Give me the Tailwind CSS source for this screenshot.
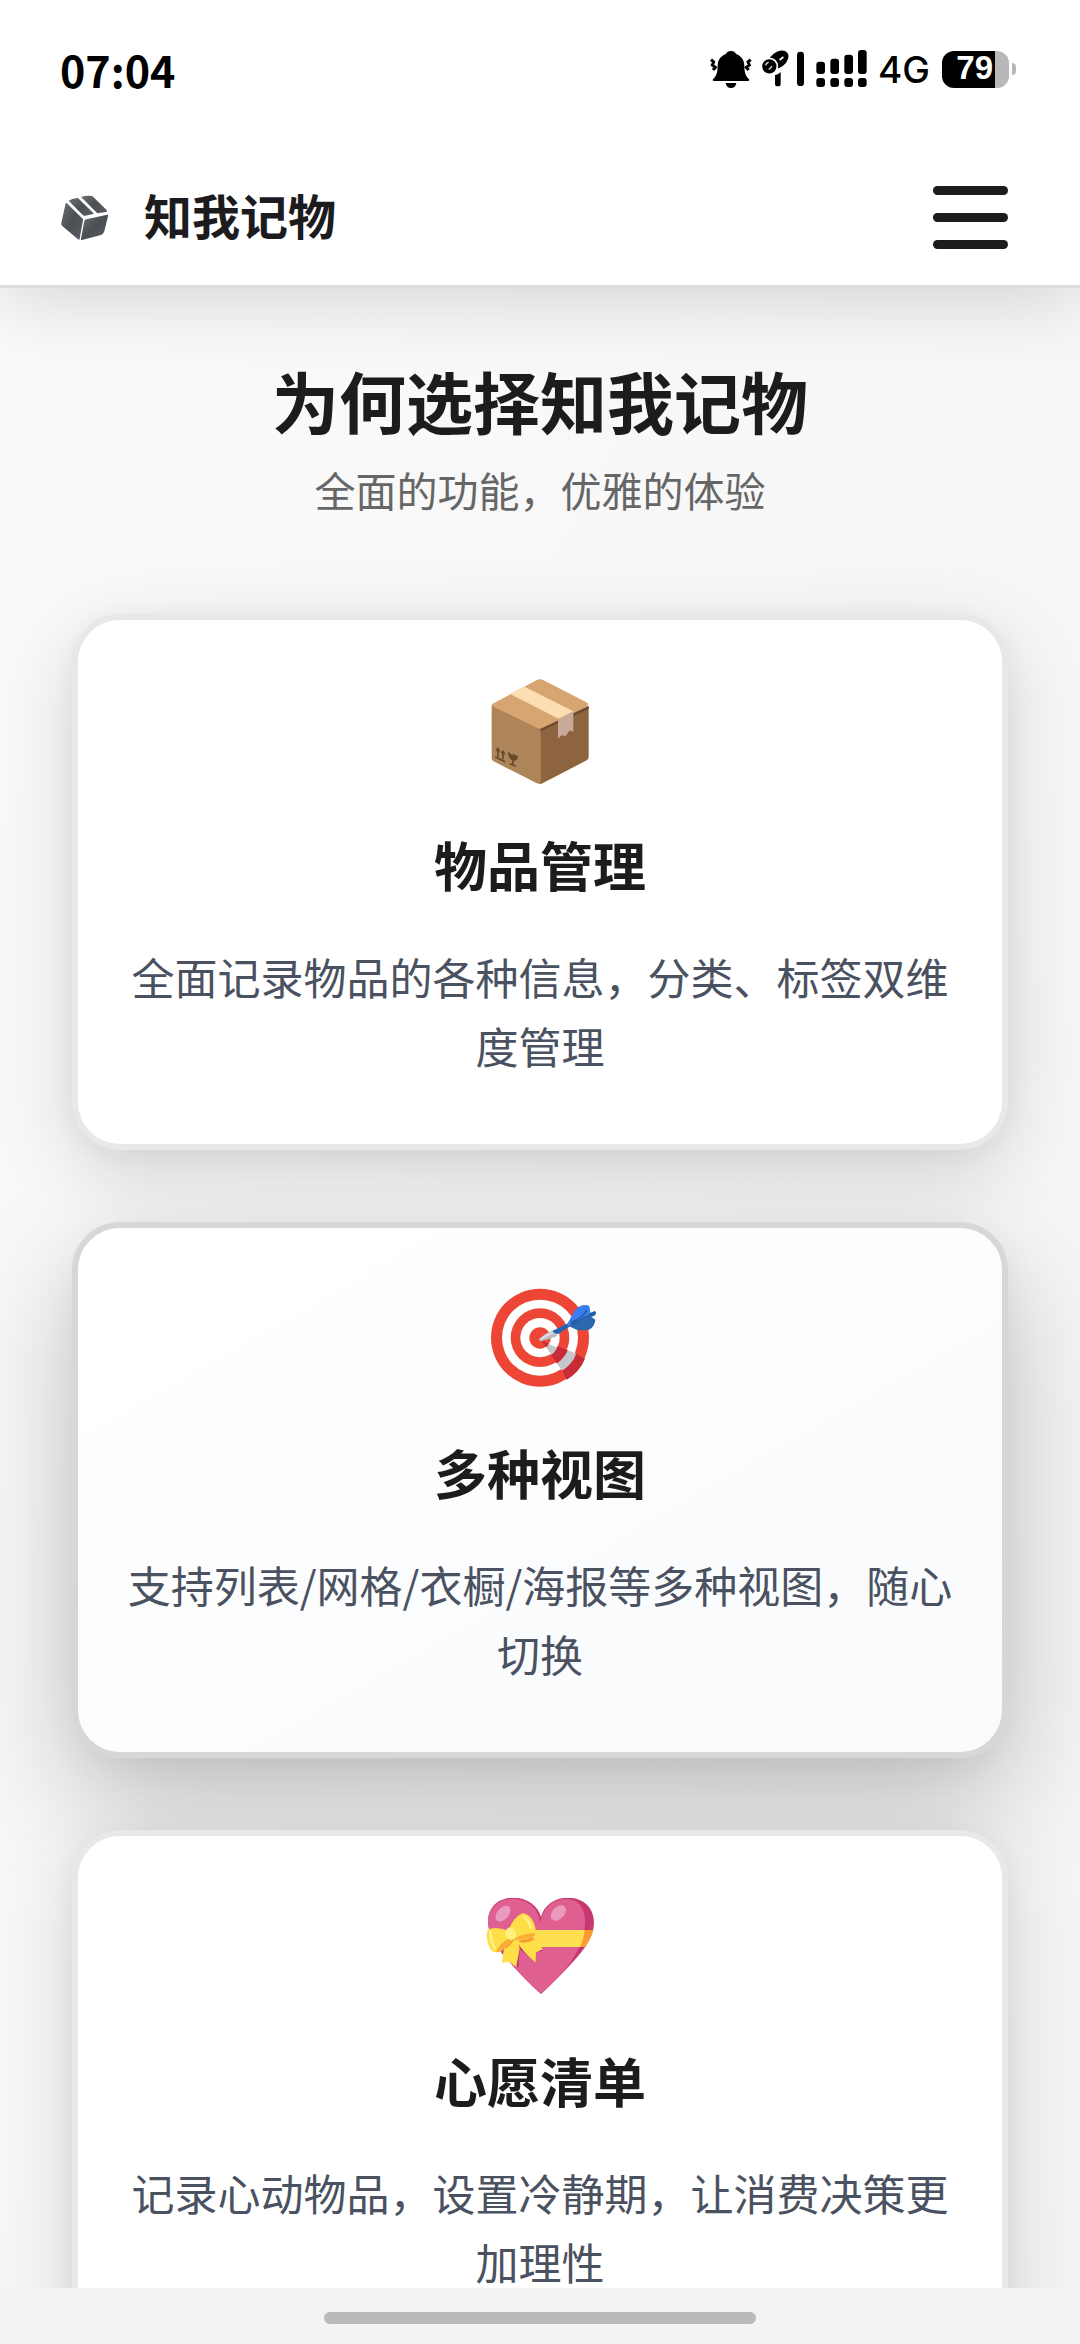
<!DOCTYPE html>
<html lang="zh-CN">
<head>
<meta charset="utf-8">
<meta name="viewport" content="width=device-width, initial-scale=1">
<title>知我记物</title>
<script src="https://cdn.jsdelivr.net/npm/@tailwindcss/browser@4"></script>
</head>
<body class="flex h-screen flex-col overflow-hidden bg-[#f8f8f8] font-['Noto_Sans_CJK_SC',sans-serif] text-[#1c1c1e]">

<header class="relative z-10 shrink-0 border-b-3 border-[#dedede] bg-white shadow-[0_12px_72px_rgba(0,0,0,0.15)]">
  <!-- Status bar -->
  <div class="flex h-[138px] items-center justify-between pr-16 pl-[60px] text-black">
    <time class="text-[43px] leading-none font-bold">07:04</time>
    <div class="flex items-center">
      <svg class="h-20 w-[184px]" viewBox="0 0 552 240" aria-label="静音、信号" role="img">
        <g transform="translate(4 0)">
          <path d="M119 66c8 0 13 4 15 9 17 6 25 19 25 35 0 20 4 30 13 40 4 4 2 6-3 6H69c-5 0-7-2-3-6 9-10 13-20 13-40 0-16 8-29 25-35 2-5 7-9 15-9zM103 162h32c-1 9-7 15-16 15s-15-6-16-15z"/>
          <path d="M59 92l8 7-4 9 9 7-7 8M178 92l-8 7 4 9-9 7 7 8" fill="none" stroke="#000" stroke-width="9"/>
          <ellipse cx="261" cy="92" rx="34" ry="23" transform="rotate(-38 261 92)"/>
          <circle cx="234" cy="112" r="24" stroke="#fff" stroke-width="5"/>
          <path d="M223 109q2-8 9-9M232 121q8-3 9-10" fill="none" stroke="#fff" stroke-width="4"/>
          <path d="M251 138c5 0 11-3 17-9v36q0 7-8 7h-1q-8 0-8-7z"/>
          <path d="M265 93l11-9" stroke="#fff" stroke-width="5"/>
          <rect x="317" y="68" width="21" height="103" rx="10"/>
          <rect x="375" y="98" width="26" height="37" rx="9"/><rect x="417" y="89" width="26" height="46" rx="9"/>
          <rect x="459" y="77" width="26" height="58" rx="9"/><rect x="500" y="63" width="26" height="72" rx="9"/>
          <rect x="375" y="147" width="26" height="27" rx="9"/><rect x="417" y="147" width="26" height="27" rx="9"/>
          <rect x="459" y="147" width="26" height="27" rx="9"/><rect x="500" y="147" width="26" height="27" rx="9"/>
        </g>
      </svg>
      <span class="pl-1 font-['Inter',sans-serif] text-[37px] leading-none font-medium">4G</span>
      <span class="ml-3 flex h-[37px] w-[67px] items-center justify-end overflow-hidden rounded-xl bg-linear-to-r from-black from-79% to-[#b8b8b8] to-79% pr-4 pb-1 font-['Liberation_Sans',sans-serif] text-[33px] leading-none font-bold text-white">79</span>
      <span class="ml-[3px] h-3 w-1 rounded-r-full bg-[#b8b8b8]"></span>
    </div>
  </div>
  <!-- Navigation -->
  <nav class="flex h-[147px] items-center justify-between pt-3 pr-[72px] pl-[60px]">
    <a href="#" class="flex items-center gap-9 text-[48px] leading-none font-bold">
      <svg class="size-12" viewBox="0 0 144 144" aria-hidden="true">
        <defs><linearGradient id="cube" x1="0" y1="0" x2="1" y2="1"><stop offset="0" stop-color="#6b6e73"/><stop offset="0.5" stop-color="#4b4e53"/><stop offset="1" stop-color="#5b5f66"/></linearGradient></defs>
        <g fill="url(#cube)" transform="translate(0 4)">
          <path d="M20 23L68 70Q70 72 69 75L59 130Q58 135 54 132L6 91Q3 88 4 83L16 28Q17 21 20 23z"/>
          <path d="M79 72L142 58Q145 58 144 63L133 108Q130 117 123 119L66 134Q62 135 63 130L73 76Q74 73 79 72z"/>
          <path d="M26 16Q37 9 54 8L102 55 76 61Q71 62 68 59z"/>
          <path d="M63 5Q78 0 95 2 99 3 102 7L139 43Q144 48 137 50L112 54z"/>
        </g>
      </svg>
      <span class="pb-2">知我记物</span>
    </a>
    <button type="button" aria-label="打开菜单" class="flex w-[75px] flex-col gap-[18px]">
      <span class="h-[9px] rounded-full bg-[#1c1c1e]"></span>
      <span class="h-[9px] rounded-full bg-[#1c1c1e]"></span>
      <span class="h-[9px] rounded-full bg-[#1c1c1e]"></span>
    </button>
  </nav>
</header>

<main class="min-h-0 flex-1 overflow-hidden bg-linear-to-br from-[#fafafa] to-[#f4f4f4] px-[72px] pt-[72px]">
  <h1 class="text-center text-[67px] leading-[80px] font-bold">为何选择知我记物</h1>
  <p class="mt-4 text-center text-[41px] leading-[66px] text-[#666]">全面的功能，优雅的体验</p>

  <div class="mt-[92px] grid gap-[72px] text-center">
    <article class="rounded-[48px] border-6 border-[#e8e8e8] bg-white px-12 pt-[42px] pb-16 shadow-[0_24px_84px_rgba(0,0,0,0.14),0_6px_24px_rgba(0,0,0,0.05)]">
      <svg class="mx-auto size-[140px]" viewBox="0 6 420 420" aria-hidden="true">
        <path d="M65 135L211 205V372Q206 372 199 369L71 304Q65 301 65 295z" fill="#ae8558"/>
        <path d="M211 203L356 137V290Q356 297 350 301L219 369Q215 372 211 372z" fill="#8e6340"/>
        <path d="M71 130L199 61Q210 54 221 61L349 127Q360 133 349 140L219 204Q211 208 202 204L71 140Q61 135 71 130z" fill="#d6a572"/>
        <path d="M211 207L356 139V147L211 214z" fill="#6f492e"/>
        <path d="M122 103L164 80 310 154 266 176z" fill="#fbdfb3"/>
        <path d="M264 178L310 155V216L300 211 287 228 275 226 264 236z" fill="#c9a997"/>
        <path d="M211 205V372" stroke="#a17447" stroke-width="2"/>
        <g fill="none" stroke="#67492c" stroke-width="5">
          <path d="M84 268V290M99 275V298M76 291L105 305M119 311L138 319M129 297V315"/>
        </g>
        <path d="M76 272l8-11 8 16zM92 278l8-9 7 16zM113 276l8 3 4 6 5-3 7 4 7 2q-1 15-14 14-15-5-17-26z" fill="#67492c"/>
      </svg>
      <h2 class="mt-5 text-[53px] leading-[84px] font-bold">物品管理</h2>
      <p class="mt-9 text-[43px] leading-[69px] text-[#4a5160]">全面记录物品的各种信息，分类、标签双维度管理</p>
    </article>

    <article class="rounded-[48px] border-6 border-[#d5d7d8] bg-linear-to-br from-white from-10% to-[#f8fafc] bg-origin-border px-12 pt-[42px] pb-16 shadow-[0_48px_120px_rgba(0,0,0,0.22),0_12px_36px_rgba(0,0,0,0.05)]">
      <svg class="mx-auto size-[140px]" viewBox="0 0 420 420" aria-hidden="true">
        <circle cx="210" cy="203" r="147" fill="#ed4637"/>
        <circle cx="210" cy="203" r="114" fill="#fff"/>
        <circle cx="210" cy="203" r="88" fill="#ed4637"/>
        <circle cx="210" cy="203" r="59" fill="#fff"/>
        <circle cx="210" cy="204" r="32" fill="#ed4637"/>
        <path d="M210 208L236 222Q234 229 229 232z" fill="#c62b36"/>
        <path d="M236 222L263 233Q257 248 245 256L229 232Q234 229 236 222z" fill="#c4c6cb"/>
        <path d="M263 229L294 241Q283 266 261 281L243 256Q257 246 263 229z" fill="#c62b36"/>
        <path d="M294 241L319 251Q308 282 277 302L261 281Q283 266 294 241z" fill="#c4c6cb"/>
        <path d="M319 251L345 266Q329 306 290 329L277 302Q308 282 319 251z" fill="#c62b36"/>
        <path d="M207 207Q223 192 247 181L263 198Q238 207 214 214 206 213 207 207z" fill="#bdbdc1"/>
        <path d="M208 207Q225 193 248 182L253 188 212 210z" fill="#ddd"/>
        <path d="M247 183L294 160 301 169 263 193Q252 192 247 183z" fill="#2264ad"/>
        <path d="M291 166L316 119Q334 101 357 107L361 128 375 123Q382 128 374 137L364 141 376 149Q374 170 357 179 338 183 320 179z" fill="#2c68ad"/>
        <path d="M291 164L316 119Q336 101 357 108 363 127 356 141 336 153 295 169z" fill="#387ef0"/>
        <path d="M303 158Q339 143 350 120M303 164Q334 150 374 127" fill="none" stroke="#235c9c" stroke-width="5"/>
      </svg>
      <h2 class="mt-5 text-[53px] leading-[84px] font-bold">多种视图</h2>
      <p class="mt-9 text-[43px] leading-[69px] text-[#4a5160]">支持列表/网格/衣橱/海报等多种视图，随心切换</p>
    </article>

    <article class="rounded-[48px] border-6 border-[#e8e8e8] bg-white px-12 pt-[42px] pb-16 shadow-[0_24px_84px_rgba(0,0,0,0.14),0_6px_24px_rgba(0,0,0,0.05)]">
      <svg class="mx-auto size-[140px]" viewBox="0 -6 420 420" aria-hidden="true">
        <defs><clipPath id="heart"><path d="M213 342Q167 302 111 237C77 198 55 163 54 126 53 84 84 53 131 53 169 53 204 75 213 111 222 75 254 53 294 53 342 53 372 85 372 127 372 168 349 201 314 240Q262 298 213 342z"/></clipPath></defs>
        <g clip-path="url(#heart)">
          <path d="M40 40H390V350H40z" fill="#c93770"/>
          <path d="M213 342Q148 294 100 230C66 188 54 160 54 126 54 84 87 56 128 56 167 56 207 80 210 130 218 85 246 58 287 57 329 58 347 89 345 130 342 220 270 290 213 342z" fill="#df5f90"/>
          <path d="M180 150H380V201H180z" fill="#ffdf50"/>
          <path d="M344 150H380V201H331Q341 179 344 150z" fill="#f79b32"/>
          <path d="M95 225L145 263 149 206 199 250 196 213 218 214 180 175 100 180z" fill="#bd2e68"/>
        </g>
        <ellipse cx="99" cy="101" rx="17" ry="28" transform="rotate(42 99 101)" fill="#eb9abd"/>
        <ellipse cx="265" cy="99" rx="18" ry="27" transform="rotate(43 265 99)" fill="#eb9abd"/>
        <path d="M105 176L96 248 117 245 139 260 149 205 143 181z" fill="#ffdf47"/>
        <path d="M137 180Q158 216 197 248L198 217 218 208Q205 185 178 171z" fill="#ffdf47"/>
        <path d="M105 184L101 206Q119 204 133 178zM143 184Q164 195 195 177L174 168z" fill="#f79b32"/>
        <path d="M115 151Q131 112 157 100 185 102 196 143 200 165 190 171 162 184 126 178z" fill="#ffdf47"/>
        <path d="M115 153Q79 137 53 149 45 170 58 202 68 222 86 216 112 204 126 178z" fill="#ffdf47"/>
        <path d="M140 172Q164 160 194 159 197 170 183 174 160 179 133 178zM112 178Q86 194 78 216 93 218 112 198 122 188 124 178z" fill="#f9ae3a"/>
        <path d="M62 156Q61 183 74 204M163 111Q178 121 182 143" fill="none" stroke="#fff18a" stroke-width="8" stroke-linecap="round"/>
        <ellipse cx="122" cy="161" rx="16" ry="19" transform="rotate(-20 122 161)" fill="#fff07e"/>
      </svg>
      <h2 class="mt-5 text-[53px] leading-[84px] font-bold">心愿清单</h2>
      <p class="mt-9 text-[43px] leading-[69px] text-[#4a5160]">记录心动物品，设置冷静期，让消费决策更加理性</p>
    </article>
  </div>
</main>

<!-- Gesture bar -->
<footer class="relative z-10 flex h-14 shrink-0 items-center justify-center bg-[#f3f3f3] pt-1">
  <div class="h-3 w-2/5 rounded-full bg-[#bababa]"></div>
</footer>
</body>
</html>
